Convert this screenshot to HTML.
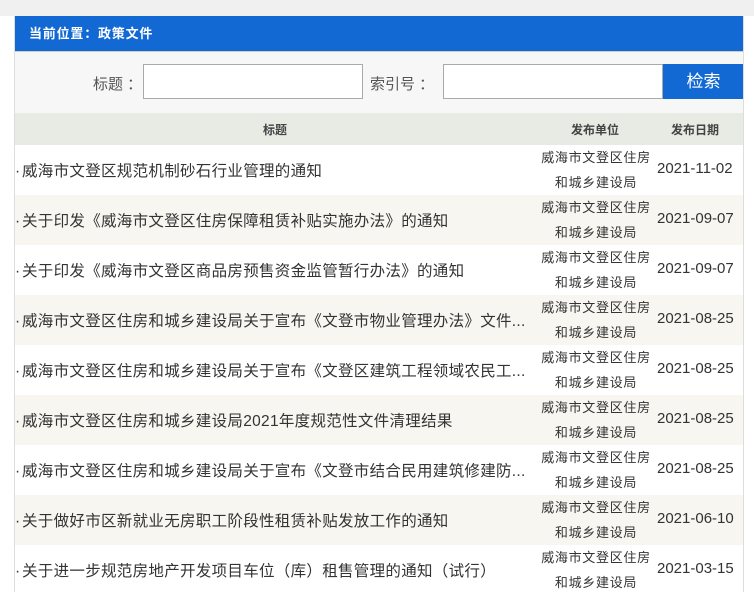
<!DOCTYPE html>
<html><head><meta charset="utf-8"><style>
*{margin:0;padding:0;box-sizing:border-box}
html,body{width:754px;height:592px;overflow:hidden}
body{background:#fff;font-family:"Liberation Sans","Noto Sans CJK SC",sans-serif;color:#333;position:relative}
.top{position:absolute;left:0;top:0;width:754px;height:16px;background:#f0f0f0}
.wrap{position:absolute;left:14px;top:16px;width:730px;height:576px;border-right:1px solid #ddd;border-left:1px solid #ddd;overflow:hidden}
.hd{height:36px;background:#1269d3;color:#fff;font-size:13px;font-weight:bold;line-height:36px;padding-left:14px;letter-spacing:0.8px;border-bottom:1px solid #ccc}
.srch{height:61px;background:#f7f7f7;position:relative;font-size:15px;color:#555}
.srch span{position:absolute;top:21px}
.inp{position:absolute;top:12px;height:35px;border:1px solid #aaa;background:#fff}
.btn{position:absolute;left:648px;top:12px;width:81px;height:35px;background:#1269d3;color:#fff;font-size:17px;text-align:center;line-height:35px}
.th{height:32px;background:#e8eae4;font-size:12px;font-weight:bold;position:relative;color:#444}
.th span{position:absolute;top:8px}
.row{height:50px;position:relative}
.row:nth-child(even){background:#f7f6f1}
.t{position:absolute;left:0;top:14px;font-size:15.5px;letter-spacing:0.3px;white-space:nowrap}
.t b{font-weight:normal;display:inline-block;width:7px}
.u{position:absolute;left:520px;width:122px;top:0;text-align:center;font-size:13px;line-height:25px;letter-spacing:0.7px}
.d{position:absolute;left:642px;top:15px;font-size:15px}
</style></head><body>
<div class="top"></div>
<div class="wrap">
<div class="hd">当前位置：政策文件</div>
<div class="srch">
<span style="left:78px">标题 ：</span><div class="inp" style="left:128px;width:220px"></div>
<span style="left:355px">索引号 ：</span><div class="inp" style="left:428px;width:220px"></div>
<div class="btn">检索</div>
</div>
<div class="th"><span style="left:248px">标题</span><span style="left:556px">发布单位</span><span style="left:656px">发布日期</span></div>
<div>
<div class="row"><div class="t"><b>·</b>威海市文登区规范机制砂石行业管理的通知</div><div class="u">威海市文登区住房<br>和城乡建设局</div><div class="d">2021-11-02</div></div>
<div class="row"><div class="t"><b>·</b>关于印发《威海市文登区住房保障租赁补贴实施办法》的通知</div><div class="u">威海市文登区住房<br>和城乡建设局</div><div class="d">2021-09-07</div></div>
<div class="row"><div class="t"><b>·</b>关于印发《威海市文登区商品房预售资金监管暂行办法》的通知</div><div class="u">威海市文登区住房<br>和城乡建设局</div><div class="d">2021-09-07</div></div>
<div class="row"><div class="t"><b>·</b>威海市文登区住房和城乡建设局关于宣布《文登市物业管理办法》文件...</div><div class="u">威海市文登区住房<br>和城乡建设局</div><div class="d">2021-08-25</div></div>
<div class="row"><div class="t"><b>·</b>威海市文登区住房和城乡建设局关于宣布《文登区建筑工程领域农民工...</div><div class="u">威海市文登区住房<br>和城乡建设局</div><div class="d">2021-08-25</div></div>
<div class="row"><div class="t"><b>·</b>威海市文登区住房和城乡建设局2021年度规范性文件清理结果</div><div class="u">威海市文登区住房<br>和城乡建设局</div><div class="d">2021-08-25</div></div>
<div class="row"><div class="t"><b>·</b>威海市文登区住房和城乡建设局关于宣布《文登市结合民用建筑修建防...</div><div class="u">威海市文登区住房<br>和城乡建设局</div><div class="d">2021-08-25</div></div>
<div class="row"><div class="t"><b>·</b>关于做好市区新就业无房职工阶段性租赁补贴发放工作的通知</div><div class="u">威海市文登区住房<br>和城乡建设局</div><div class="d">2021-06-10</div></div>
<div class="row"><div class="t"><b>·</b>关于进一步规范房地产开发项目车位（库）租售管理的通知（试行）</div><div class="u">威海市文登区住房<br>和城乡建设局</div><div class="d">2021-03-15</div></div>
</div>
</div>
</body></html>
